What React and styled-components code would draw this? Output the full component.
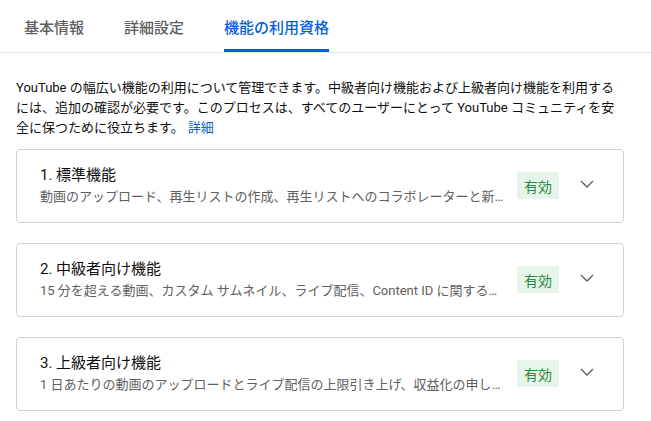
import styled, { createGlobalStyle } from "styled-components"

const GlobalStyle = createGlobalStyle`
  body {
    margin: 0;
    background: #fff;
    font-family: Roboto, "Noto Sans CJK JP", sans-serif;
    color: #0f0f0f;
  }
`

const Page = styled.div`
  width: 651px;
`

const TabBar = styled.div`
  display: flex;
  gap: 40px;
  padding: 0 24px;
  border-bottom: 1px solid #e5e5e5;
`

const Tab = styled.div`
  box-sizing: border-box;
  height: 52px;
  padding-top: 4px;
  display: flex;
  align-items: center;
  font-size: 15px;
  font-weight: 500;
  color: ${(p) => (p.$active ? "#065fd4" : "#606060")};
  border-bottom: 3px solid ${(p) => (p.$active ? "#065fd4" : "transparent")};
`

const Content = styled.div`
  padding: 25px 27px 0 16px;
`

const Intro = styled.p`
  margin: 0 0 11px;
  font-size: 13px;
  line-height: 20px;
  color: #0f0f0f;
`

const Link = styled.a`
  color: #065fd4;
  text-decoration: none;
  margin-left: 4px;
`

const List = styled.div`
  display: flex;
  flex-direction: column;
  gap: 20px;
`

const Card = styled.div`
  display: flex;
  align-items: center;
  padding: 15px 24px 16px 23px;
  border: 1px solid #d3d3d3;
  border-radius: 4px;
`

const Info = styled.div`
  flex: 1;
  min-width: 0;
  display: flex;
  flex-direction: column;
  gap: 3px;
`

const Title = styled.div`
  font-size: 15px;
  line-height: 20px;
  font-weight: 400;
  color: #0f0f0f;
`

const Sub = styled.div`
  font-size: 13px;
  line-height: 18px;
  color: #606060;
  white-space: nowrap;
  overflow: hidden;
  text-overflow: ellipsis;
`

const Badge = styled.div`
  height: 27px;
  padding: 0 7px;
  margin-left: 8px;
  display: flex;
  align-items: center;
  font-size: 14px;
  color: #2a8a3e;
  background: #e6f4ea;
  flex-shrink: 0;
`

const Chevron = styled.svg`
  width: 24px;
  height: 24px;
  margin-left: 16px;
  flex-shrink: 0;
`

const features = [
  {
    title: "1. 標準機能",
    desc: "動画のアップロード、再生リストの作成、再生リストへのコラボレーターと新しい動画の追加などの機能を利用できます",
  },
  {
    title: "2. 中級者向け機能",
    desc: "15 分を超える動画、カスタム サムネイル、ライブ配信、Content ID に関する再審査請求",
  },
  {
    title: "3. 上級者向け機能",
    desc: "1 日あたりの動画のアップロードとライブ配信の上限引き上げ、収益化の申し込みなど",
  },
]

function App() {
  return (
    <Page>
      <GlobalStyle />
      <TabBar>
        <Tab>基本情報</Tab>
        <Tab>詳細設定</Tab>
        <Tab $active>機能の利用資格</Tab>
      </TabBar>
      <Content>
        <Intro>
          YouTube の幅広い機能の利用について管理できます。中級者向け機能および上級者向け機能を利用するには、追加の確認が必要です。このプロセスは、すべてのユーザーにとって YouTube コミュニティを安全に保つために役立ちます。
          <Link href="#">詳細</Link>
        </Intro>
        <List>
          {features.map((f) => (
            <Card key={f.title}>
              <Info>
                <Title>{f.title}</Title>
                <Sub>{f.desc}</Sub>
              </Info>
              <Badge>有効</Badge>
              <Chevron viewBox="0 0 24 24" fill="none">
                <path d="M6 7l6 6 6-6" stroke="#606060" strokeWidth="1.4" />
              </Chevron>
            </Card>
          ))}
        </List>
      </Content>
    </Page>
  )
}

export default App
